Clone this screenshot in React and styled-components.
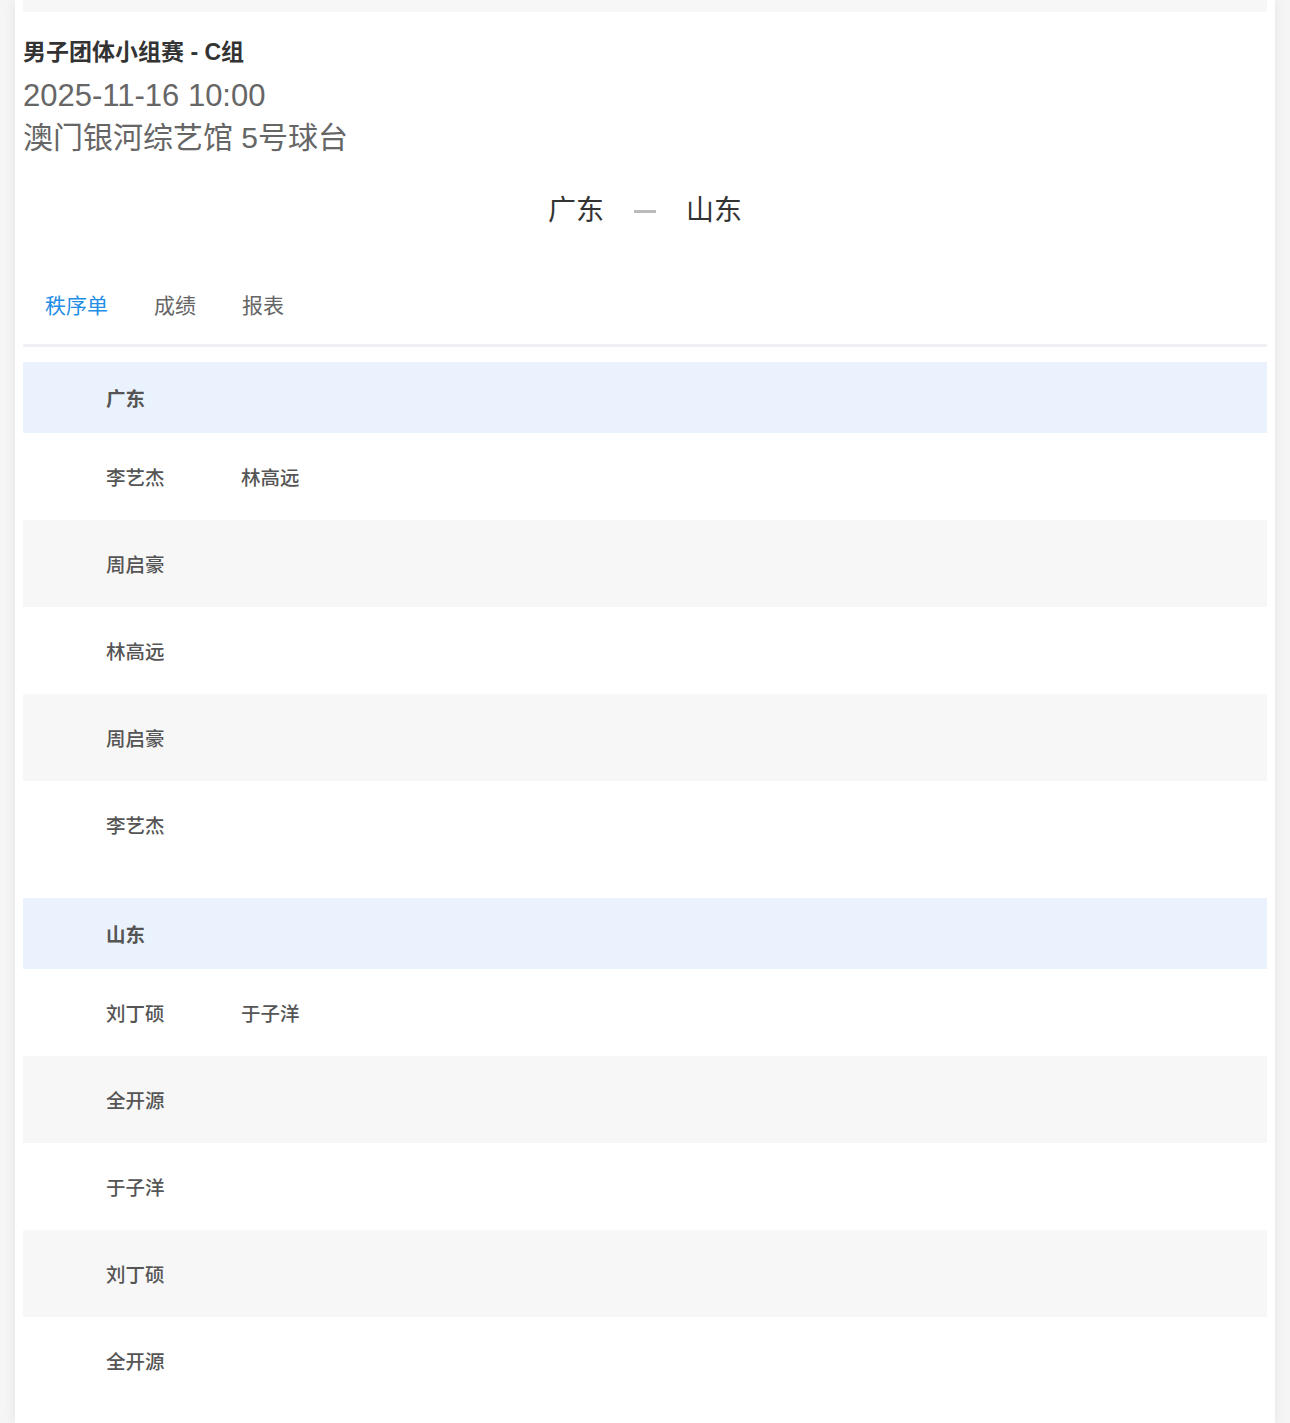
import React, { useState } from 'react'
import styled, { createGlobalStyle } from 'styled-components'

const GlobalStyle = createGlobalStyle`
  html, body {
    margin: 0;
    padding: 0;
    background: #f5f5f5;
    font-family: "Liberation Sans", "Noto Sans CJK SC", sans-serif;
  }
`

const Page = styled.div`
  width: 1290px;
  min-height: 1423px;
  display: flex;
  justify-content: center;
`

const Card = styled.div`
  width: 1260px;
  background: #fff;
  box-shadow: 0 0 12px rgba(0, 0, 0, 0.07);
  padding: 0 8px 20px;
  box-sizing: border-box;
`

const TopStrip = styled.div`
  height: 12px;
  background: #f7f7f7;
`

const Info = styled.div`
  display: flex;
  flex-direction: column;
  padding-top: 25px;
`

const Title = styled.div`
  font-size: 23px;
  font-weight: 700;
  color: #333;
  line-height: 30px;
`

const Meta = styled.div`
  font-size: ${p => p.size}px;
  color: #666;
  margin-top: ${p => p.gap}px;
  line-height: ${p => p.lh}px;
`

const Versus = styled.div`
  display: flex;
  justify-content: center;
  align-items: center;
  gap: 30px;
  margin-top: 32px;
  font-size: 28px;
  color: #333;
  line-height: 40px;
`

const Dash = styled.span`
  width: 22px;
  height: 3px;
  background: #bbb;
`

const Tabs = styled.div`
  display: flex;
  gap: 46px;
  margin-top: 42px;
  padding: 20px 22px 0;
  height: 74px;
  align-items: flex-start;
  border-bottom: 3px solid #eef0f5;
  box-sizing: border-box;
`

const Tab = styled.div`
  font-size: 21px;
  line-height: 26px;
  color: ${p => (p.active ? '#1f8ee6' : '#666')};
  cursor: pointer;
`

const Section = styled.div`
  margin-top: ${p => p.gap}px;
`

const Row = styled.div`
  display: grid;
  grid-template-columns: 83px 135px 1fr;
  height: ${p => (p.head ? 71 : 87)}px;
  align-items: center;
  background: ${p => (p.head ? '#eaf2fd' : p.shade ? '#f7f7f7' : '#fff')};
  font-size: 19.5px;
  font-weight: ${p => (p.head ? 600 : 500)};
  color: #555;
`

const Cell = styled.div`
  height: 100%;
  display: flex;
  align-items: center;
`

const teams = [
  {
    name: '广东',
    rows: [['李艺杰', '林高远'], ['周启豪'], ['林高远'], ['周启豪'], ['李艺杰']],
  },
  {
    name: '山东',
    rows: [['刘丁硕', '于子洋'], ['全开源'], ['于子洋'], ['刘丁硕'], ['全开源']],
  },
]

function TeamTable({ team, gap }) {
  return (
    <Section gap={gap}>
      <Row head>
        <Cell />
        <Cell>{team.name}</Cell>
        <Cell />
      </Row>
      {team.rows.map((r, i) => (
        <Row key={i} shade={i % 2 === 1}>
          <Cell />
          <Cell>{r[0]}</Cell>
          <Cell>{r[1] || ''}</Cell>
        </Row>
      ))}
    </Section>
  )
}

export default function App() {
  const [tab, setTab] = useState('秩序单')

  return (
    <Page>
      <GlobalStyle />
      <Card>
        <TopStrip />
        <Info>
          <Title>男子团体小组赛 - C组</Title>
          <Meta size={31} gap={10} lh={38}>2025-11-16 10:00</Meta>
          <Meta size={30} gap={2} lh={42}>澳门银河综艺馆 5号球台</Meta>
        </Info>
        <Versus>
          <span>广东</span>
          <Dash />
          <span>山东</span>
        </Versus>
        <Tabs>
          {['秩序单', '成绩', '报表'].map(t => (
            <Tab key={t} active={tab === t} onClick={() => setTab(t)}>{t}</Tab>
          ))}
        </Tabs>
        <TeamTable team={teams[0]} gap={15} />
        <TeamTable team={teams[1]} gap={30} />
      </Card>
    </Page>
  )
}
